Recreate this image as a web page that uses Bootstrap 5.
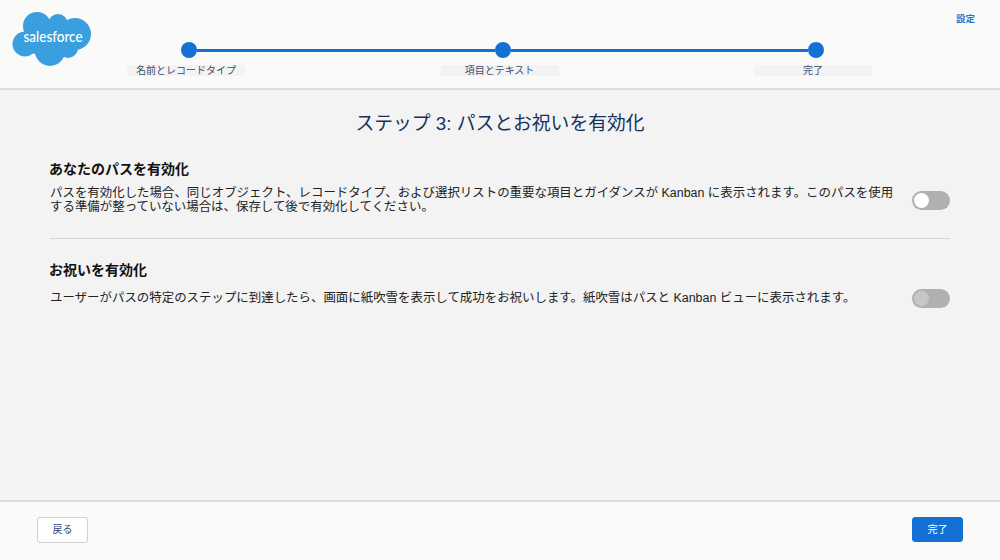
<!DOCTYPE html>
<html lang="ja">
<head>
<meta charset="utf-8">
<title>Path</title>
<link rel="stylesheet" href="https://cdn.jsdelivr.net/npm/bootstrap@5.3.0/dist/css/bootstrap.min.css">
<style>
html,body{height:100%}
body{width:1000px;height:560px;overflow:hidden;background:#f3f3f3;font-family:"Liberation Sans","Noto Sans CJK JP",sans-serif;color:#1c1c1c}
.topbar{height:90px;background:#fafaf9;border-bottom:2px solid #dcdcdc;position:relative}
.logo-cloud{position:absolute;left:12px;top:11px;width:80px;height:56px}
.settings-link{position:absolute;left:956px;top:12px;font-size:9.5px;font-weight:700;color:#1b77d2;text-decoration:none;line-height:13px}
.stepper{padding:42px 0 0 127px;width:872px}
.dot-track{padding-left:54px;width:697px}
.step-dot{width:16px;height:16px;border-radius:50%;background:#1570d6;flex:none}
.step-line{height:3px;background:#1570d6;flex:1 1 0}
.label-row{margin-top:7px}
.step-label{width:118px;height:11px;background:#f3f3f3;color:#3e4e6c;font-size:10px;line-height:11px;text-align:center}
.main-pane{height:410px;padding:0 50px}
.page-title{font-size:18.8px;font-weight:400;color:#16325c;text-align:center;line-height:24px;margin:0;padding-top:22px}
.opt-title{font-size:14px;font-weight:700;line-height:18px;margin:0 0 9px -1px;color:#111}
.opt-b .opt-title{margin-bottom:10px}
.opt-text{font-size:12.45px;line-height:13.5px;margin:0;color:#222}
.opt-a{padding-top:24px;height:102px}
.opt-b{padding-top:22px}
.divider-line{height:1px;background:#d4d4d4}
.toggle-pill{width:38px;height:19px;border-radius:10px;background:#b0b0b0;padding:2px;flex:none;margin-left:17px}
.toggle-knob{display:block;width:15px;height:15px;border-radius:50%;background:#fff}
.toggle-off .toggle-knob{background:#c6c6c6}
.bottombar{height:60px;background:#fafaf9;border-top:2px solid #dcdcdc;padding:15px 37px 0}
.btn-back,.btn-done{height:26px;width:51px;font-size:10px;line-height:24px;padding:0;border-radius:3px}
.btn-back{background:#fff;border:1px solid #d0d0d0;color:#2f4a78}
.btn-done{background:#1570d6;border:1px solid #1570d6;color:#fff;height:25px}
</style>
</head>
<body>
<header class="topbar">
  <svg class="logo-cloud" viewBox="0 0 80 56" aria-hidden="true">
    <g fill="#3a9fdf">
      <circle cx="25" cy="15" r="14"/><circle cx="46" cy="13" r="10"/><circle cx="63" cy="23" r="16"/>
      <circle cx="13" cy="33" r="12.5"/><circle cx="38" cy="40" r="15"/><circle cx="56" cy="37" r="10"/><circle cx="28" cy="30" r="14"/><circle cx="44" cy="27" r="14"/>
    </g>
    <text x="41" y="31" text-anchor="middle" fill="#fff" font-family="Lato,Open Sans,sans-serif" font-weight="500" font-size="15.5" textLength="59" lengthAdjust="spacingAndGlyphs">salesforce</text>
  </svg>
  <a class="settings-link" href="#">設定</a>
  <div class="stepper">
    <div class="dot-track d-flex align-items-center">
      <span class="step-dot"></span><span class="step-line"></span>
      <span class="step-dot"></span><span class="step-line"></span>
      <span class="step-dot"></span>
    </div>
    <div class="label-row d-flex justify-content-between">
      <div class="step-label">名前とレコードタイプ</div>
      <div class="step-label">項目とテキスト</div>
      <div class="step-label">完了</div>
    </div>
  </div>
</header>
<main class="main-pane">
  <h1 class="page-title">ステップ 3: パスとお祝いを有効化</h1>
  <section class="opt-a">
    <h2 class="opt-title">あなたのパスを有効化</h2>
    <div class="d-flex align-items-center">
      <p class="opt-text flex-grow-1">パスを有効化した場合、同じオブジェクト、レコードタイプ、および選択リストの重要な項目とガイダンスが Kanban に表示されます。このパスを使用する準備が整っていない場合は、保存して後で有効化してください。</p>
      <span class="toggle-pill"><span class="toggle-knob"></span></span>
    </div>
  </section>
  <div class="divider-line"></div>
  <section class="opt-b">
    <h2 class="opt-title">お祝いを有効化</h2>
    <div class="d-flex align-items-center">
      <p class="opt-text flex-grow-1">ユーザーがパスの特定のステップに到達したら、画面に紙吹雪を表示して成功をお祝いします。紙吹雪はパスと Kanban ビューに表示されます。</p>
      <span class="toggle-pill toggle-off"><span class="toggle-knob"></span></span>
    </div>
  </section>
</main>
<footer class="bottombar d-flex justify-content-between align-items-start">
  <button class="btn btn-back" type="button">戻る</button>
  <button class="btn btn-done" type="button">完了</button>
</footer>
<script src="https://cdn.jsdelivr.net/npm/bootstrap@5.3.0/dist/js/bootstrap.bundle.min.js"></script>
</body>
</html>
